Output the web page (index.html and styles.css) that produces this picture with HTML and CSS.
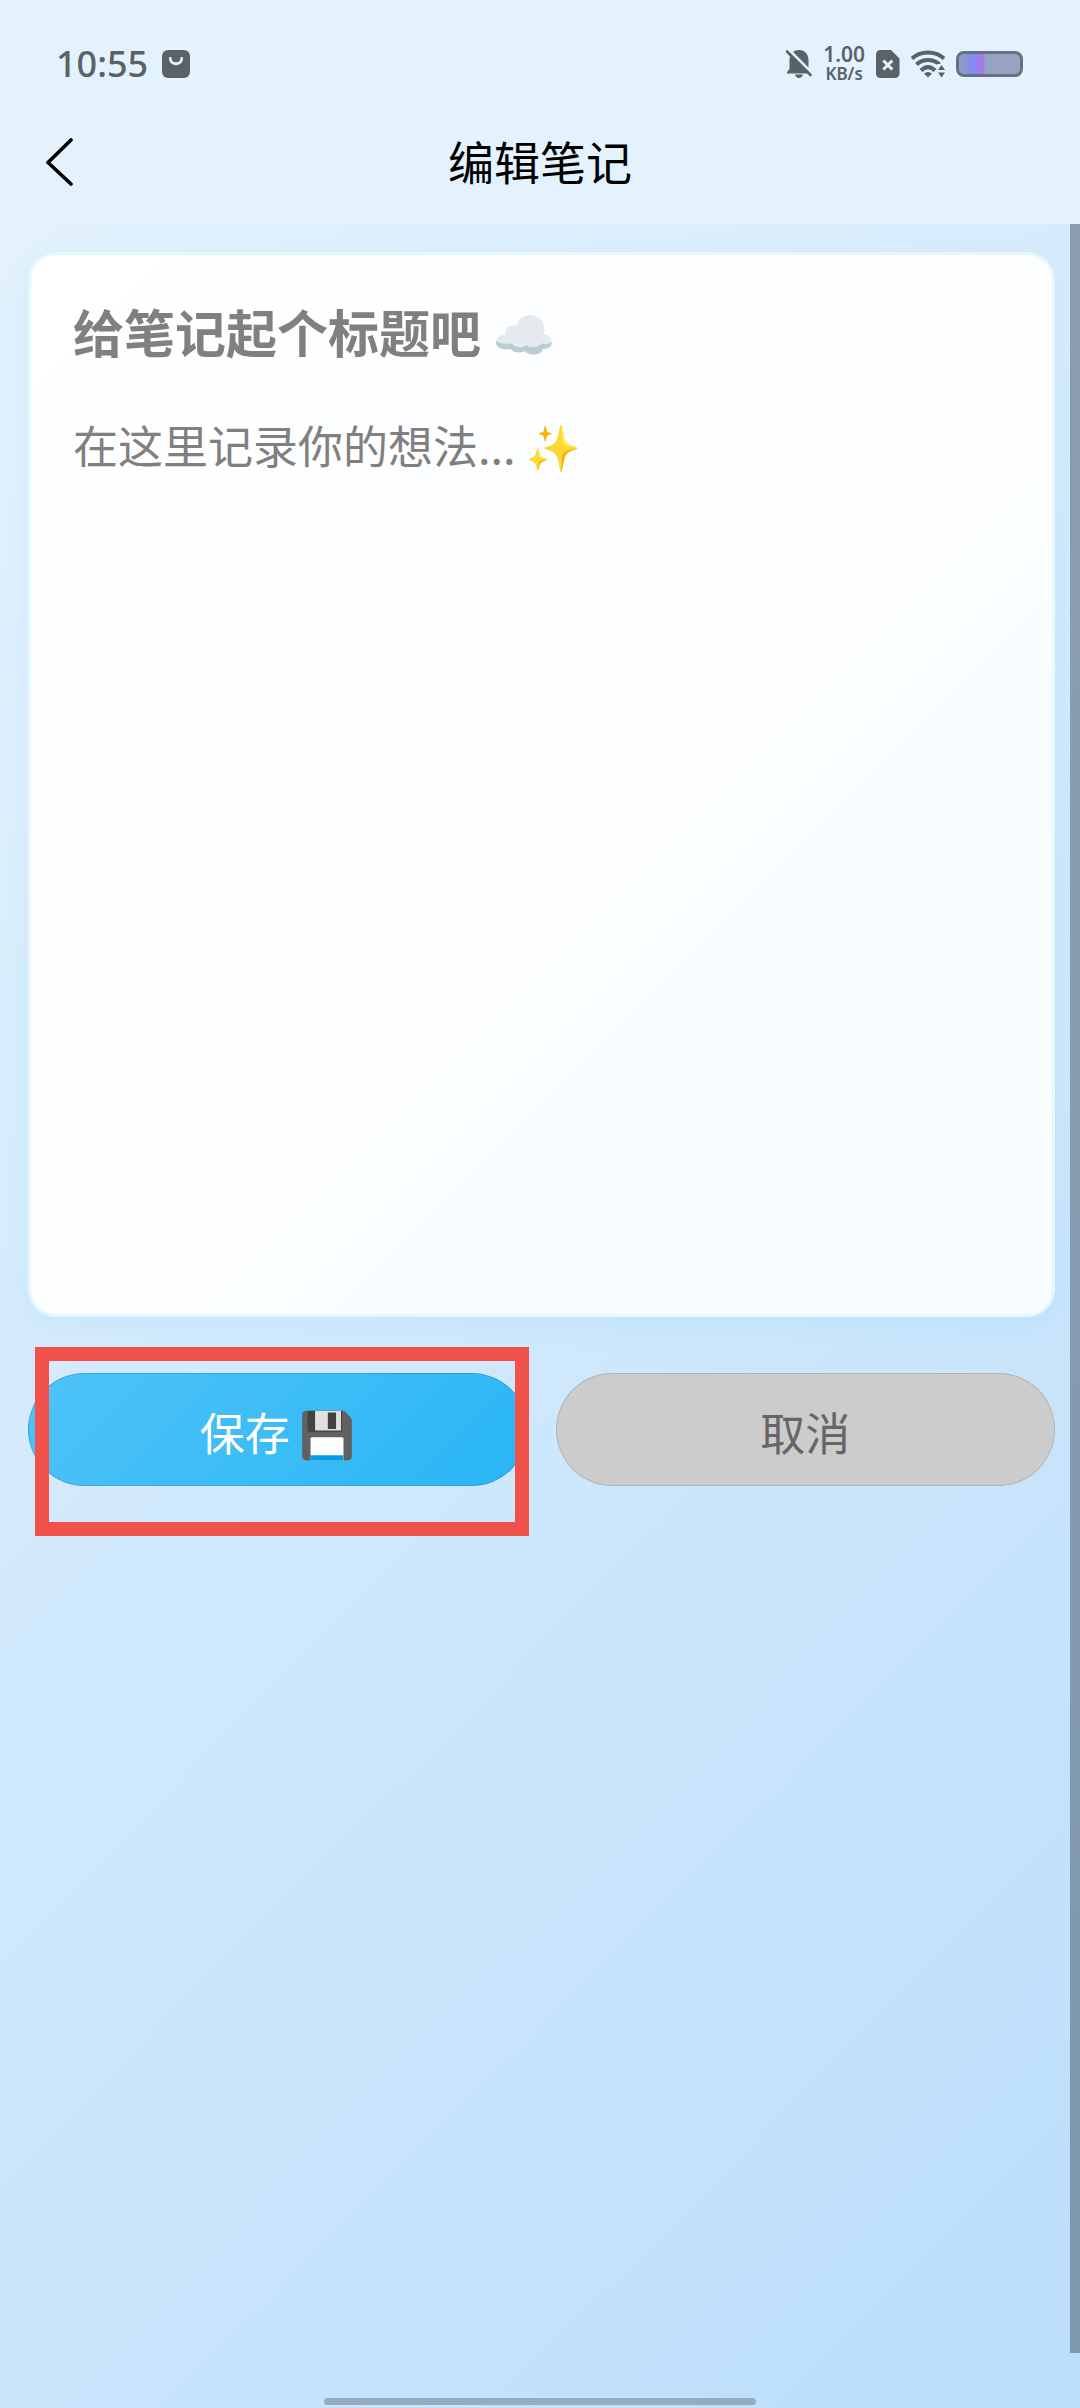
FILE: index.html
```
<!DOCTYPE html>
<html lang="zh-CN">
<head>
    <meta charset="UTF-8">
    <meta name="viewport" content="width=device-width, initial-scale=1.0">
    <title>编辑笔记</title>
    <link rel="stylesheet" href="styles.css">
</head>
<body>

<header class="header">
    <div class="status-bar">
        <div class="status-left">
            <span class="clock">10:55</span>
            <svg class="app-icon" width="28" height="28" viewBox="0 0 28 28">
                <rect width="28" height="28" rx="6" fill="#5a6268"/>
                <path d="M8.3 8.5c0 7 11.4 7 11.4 0" fill="none" stroke="#e3f2fd" stroke-width="2.8" stroke-linecap="round"/>
            </svg>
        </div>
        <div class="status-right">
            <svg width="26" height="30" viewBox="0 0 26 30">
                <path d="M13 1C7 1 3.500 5.500 3.500 11v9L1 23v1.500h24V23l-2.500-3v-9C22.500 5.500 19 1 13 1zM9 25.500h8c-.5 2-2 3.500-4 3.500s-3.500-1.500-4-3.500z" fill="#5a6268"/>
                <path d="M2.500 0.500L26.500 24.500" stroke="#e3f2fd" stroke-width="3"/>
                <path d="M1 2.500L24.500 26" stroke="#5a6268" stroke-width="2.600" stroke-linecap="round"/>
            </svg>
            <div class="net-speed">
                <span class="net-value">1.00</span>
                <span class="net-unit">KB/s</span>
            </div>
            <svg width="24" height="28" viewBox="0 0 24 28">
                <path d="M4.500 0H15l8.500 8.500v15a4.500 4.500 0 0 1-4.500 4.500H4.500A4.500 4.500 0 0 1 0 23.500v-19A4.500 4.500 0 0 1 4.500 0z" fill="#5a6268"/>
                <path d="M7.300 10.500l9 9M16.300 10.500l-9 9" stroke="#e3f2fd" stroke-width="3"/>
            </svg>
            <svg width="34" height="28" viewBox="0 0 34 28">
                <g fill="none" stroke="#5a6268" stroke-width="4">
                    <path d="M1 8.500C10 0.500 24 0.500 33 8.500"/>
                    <path d="M5.500 14.500C12 8.500 22 8.500 28.500 14.500"/>
                    <path d="M10 20.500C14.500 16.200 19.500 16.200 24 20.500"/>
                </g>
                <path d="M13 23.500c2.500-2 5.500-2 8 0L17 27.500z" fill="#5a6268"/>
                <path d="M26 14h8v14h-8z" fill="#e3f2fd"/>
                <path d="M30.500 15l3.500 5h-7zM30.500 27.500l3.500-5h-7z" fill="#5a6268"/>
            </svg>
            <div class="battery"><div class="battery-level"></div></div>
        </div>
    </div>
    <div class="nav-bar">
        <button class="back-btn" type="button" aria-label="返回">
            <svg width="28" height="48" viewBox="0 0 28 48">
                <path d="M25 2L2 24.500L25 46" fill="none" stroke="#000" stroke-width="3.600" stroke-linecap="round" stroke-linejoin="round"/>
            </svg>
        </button>
        <h1 class="nav-title">编辑笔记</h1>
    </div>
</header>

<main class="page">
    <form class="note-form">
        <div class="note-card">
            <input type="text" class="note-title" aria-label="标题" placeholder="给笔记起个标题吧 ☁️">
            <textarea class="note-content" aria-label="内容" placeholder="在这里记录你的想法... ✨"></textarea>
        </div>
        <div class="button-group">
            <button type="button" class="btn save-btn">保存 💾</button>
            <button type="button" class="btn cancel-btn">取消</button>
            <div class="highlight"></div>
        </div>
    </form>
    <div class="scrollbar"></div>
</main>

<div class="home-indicator"></div>

</body>
</html>
```
FILE: styles.css
```
* {
    box-sizing: border-box;
}
body {
    margin: 0;
    min-height: 100vh;
    display: flex;
    flex-direction: column;
    position: relative;
    font-family: "Noto Sans", "Noto Sans CJK SC", "Noto Color Emoji", sans-serif;
    background-color: #e3f2fd;
}
.header {
    height: 224px;
    background-color: #e3f2fd;
}
.status-bar {
    height: 100px;
    padding: 28px 57px 0 56px;
    display: flex;
    justify-content: space-between;
    align-items: center;
    color: #5a6268;
}
.status-left, .status-right {
    display: flex;
    align-items: center;
}
.status-left {
    gap: 14px;
}
.status-right {
    gap: 11px;
}
.clock {
    font-size: 36px;
    font-weight: 500;
    line-height: 40px;
}
.net-speed {
    display: flex;
    flex-direction: column;
    align-items: center;
    font-weight: 600;
    line-height: 20px;
}
.net-value {
    font-size: 21px;
}
.net-unit {
    font-size: 17px;
}
.battery {
    width: 67px;
    height: 26px;
    border: 3px solid #667085;
    border-radius: 8px;
    background-color: #98a2c2;
    overflow: hidden;
}
.battery-level {
    width: 27px;
    height: 100%;
    background: linear-gradient(90deg, #8a9cc8 15%, #8888ee 45%, #8888ee 60%, #a67be0 75%, #a67be0 90%, #98a2c2);
}
.nav-bar {
    height: 124px;
    padding: 0 46px;
    display: grid;
    grid-template-columns: 1fr auto 1fr;
    align-items: center;
}
.back-btn {
    justify-self: start;
    display: flex;
    padding: 0;
    border: none;
    background: none;
    cursor: pointer;
}
.nav-title {
    margin: 0 0 4px;
    font-family: "Noto Sans CJK SC", sans-serif;
    font-size: 46px;
    font-weight: 400;
    line-height: 64px;
    color: #000;
}
.page {
    flex: 1;
    position: relative;
    padding: 28px 25px 55px 28px;
    background: linear-gradient(135deg, #e3f2fd 0%, #bbdefb 100%);
}
.note-card {
    padding: 42px;
    border: 3px solid rgba(225, 245, 254, 0.8);
    border-radius: 28px;
    background: linear-gradient(135deg, #ffffff, #f8fcff);
    box-shadow: 0 8px 24px rgba(129, 212, 250, 0.15);
}
.note-title, .note-content {
    display: block;
    width: 100%;
    padding: 0;
    border: none;
    outline: none;
    background: transparent;
    font-family: "Noto Sans CJK SC", "Noto Color Emoji", sans-serif;
    color: #333;
}
.note-title {
    height: 68px;
    margin-bottom: 44px;
    font-size: 51px;
    font-weight: bold;
}
.note-content {
    height: 863px;
    font-size: 45px;
    line-height: 72px;
    resize: none;
}
.note-title::placeholder, .note-content::placeholder {
    color: #808080;
}
.button-group {
    position: relative;
    display: flex;
    gap: 28px;
    margin-top: 56px;
}
.btn {
    flex: 1;
    height: 113px;
    padding: 4px 0 0;
    border: 1px solid rgba(0, 0, 0, 0.12);
    border-radius: 57px;
    font-family: "Noto Sans CJK SC", "Noto Color Emoji", sans-serif;
    font-size: 45px;
    cursor: pointer;
}
.save-btn {
    background: linear-gradient(135deg, #4fc3f7, #29b6f6);
    color: white;
}
.cancel-btn {
    background-color: #ccc;
    color: #666;
}
.highlight {
    position: absolute;
    top: -26px;
    left: 7px;
    width: 494px;
    height: 189px;
    border: 14px solid #f0524b;
    pointer-events: none;
}
.scrollbar {
    position: absolute;
    top: 0;
    right: 0;
    bottom: 55px;
    width: 10px;
    background-color: rgba(65, 82, 98, 0.5);
}
.home-indicator {
    position: absolute;
    left: 30%;
    right: 30%;
    bottom: 3px;
    height: 7px;
    border-radius: 4px;
    background-color: #95abbe;
}
```
